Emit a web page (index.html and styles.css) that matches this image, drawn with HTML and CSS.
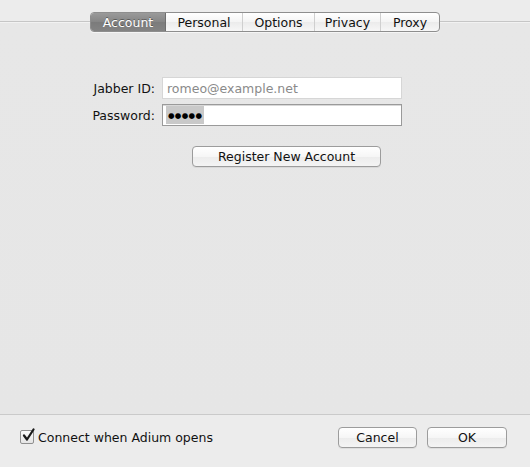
FILE: index.html
```html
<!DOCTYPE html>
<html>
<head>
<meta charset="utf-8">
<link rel="stylesheet" href="styles.css">
</head>
<body>
<div class="window">
  <div class="main">
    <div class="tabrow">
      <div class="rule"></div>
      <div class="tabs">
        <div class="tab sel t-account">Account</div>
        <div class="tab t-personal">Personal</div>
        <div class="tab t-options">Options</div>
        <div class="tab t-privacy">Privacy</div>
        <div class="tab t-proxy">Proxy</div>
      </div>
      <div class="rule"></div>
    </div>
    <div class="form">
      <div class="row">
        <label class="lbl">Jabber ID:</label>
        <div class="field idfield"><span class="ph">romeo@example.net</span></div>
      </div>
      <div class="row">
        <label class="lbl">Password:</label>
        <div class="field pwfield"><span class="dots">●●●●●</span></div>
      </div>
      <div class="regrow">
        <button class="btn regbtn">Register New Account</button>
      </div>
    </div>
  </div>
  <div class="bottom">
    <div class="check">
      <span class="box"><svg width="14" height="15" viewBox="0 0 14 15"><path d="M3 7.5 L6 11.5 L12.5 1.5" fill="none" stroke="#1a1a1a" stroke-width="2.2" stroke-linecap="round" stroke-linejoin="round"/></svg></span>
      <span class="ctext">Connect when Adium opens</span>
    </div>
    <div class="actions">
      <button class="btn cancel">Cancel</button>
      <button class="btn ok">OK</button>
    </div>
  </div>
</div>
</body>
</html>
```

FILE: styles.css
```css
* { box-sizing: border-box; }
html, body { margin: 0; padding: 0; }
body {
  width: 530px;
  height: 467px;
  overflow: hidden;
  font-family: "DejaVu Sans", "Liberation Sans", sans-serif;
  font-size: 12.5px;
  color: #111;
  background: #e8e8e8;
}
.window { display: flex; flex-direction: column; height: 467px; }
.main {
  height: 414px;
  background: linear-gradient(#ececec 0, #ececec 21px, #e7e7e7 22px, #e6e6e6 100%);
}
.tabrow {
  display: flex;
  align-items: center;
  padding-top: 12px;
  height: 32px;
}
.rule {
  flex: 1;
  height: 2px;
  border-top: 1px solid #c6c6c6;
  border-bottom: 1px solid #f2f2f2;
}
.tabs {
  display: flex;
  height: 20px;
  border: 1px solid #8e8e8e;
  border-radius: 4px;
  overflow: hidden;
  background: linear-gradient(#ffffff, #f4f4f4 50%, #ebebeb 51%, #f7f7f7);
  box-shadow: 0 1px 0 rgba(255,255,255,0.6);
}
.tab {
  display: flex;
  align-items: center;
  justify-content: center;
  border-left: 1px solid #cfcfcf;
  color: #111;
  line-height: 1;
  padding-top: 2px;
}
.tab:first-child { border-left: none; }
.tab.sel {
  background: linear-gradient(#9a9a9a, #858585 50%, #7b7b7b 51%, #838383);
  color: #fff;
  text-shadow: 0 -1px 0 rgba(0,0,0,0.35);
  border-right: 1px solid #6e6e6e;
}
.tab.sel + .tab { border-left: none; }
.t-account { width: 75px; }
.t-personal { width: 76px; }
.t-options { width: 72px; }
.t-privacy { width: 66px; }
.t-proxy { width: 59px; }

.form { padding-top: 45px; }
.row {
  display: flex;
  align-items: center;
  height: 22px;
  margin-bottom: 5px;
}
.lbl {
  width: 156px;
  text-align: right;
  padding-right: 1px;
  padding-top: 1px;
  color: #111;
}
.field {
  margin-left: 6px;
  width: 240px;
  height: 22px;
  background: #fff;
  display: flex;
  align-items: center;
  padding-left: 4px;
  padding-top: 1px;
}
.idfield { border: 1px solid #d6d6d6; }
.ph { color: #8a8a8a; }
.pwfield {
  border: 1px solid #9a9a9a;
  box-shadow: inset 0 1px 0 #d8d8d8;
  padding-left: 3px;
  padding-top: 0;
}
.dots {
  background: #c9c9c9;
  color: #000;
  font-family: "DejaVu Sans", sans-serif;
  font-size: 7.5px;
  letter-spacing: 0.3px;
  height: 18px;
  line-height: 20px;
  padding: 0 1px 0 2px;
  width: 38px;
  display: inline-block;
}
.regrow { padding-left: 192px; padding-top: 15px; }
.btn {
  font-family: "DejaVu Sans", "Liberation Sans", sans-serif;
  font-size: 12.5px;
  color: #111;
  height: 21px;
  border: 1px solid #9c9c9c;
  border-radius: 4px;
  background: linear-gradient(#ffffff, #f6f6f6 50%, #ececec 51%, #f4f4f4);
  box-shadow: 0 1px 0 rgba(0,0,0,0.06);
  padding: 1px 0 0 0;
  line-height: 18px;
  text-align: center;
}
.regbtn { width: 189px; }

.bottom {
  flex: 1;
  border-top: 1px solid #cacaca;
  background: #ececec;
  display: flex;
  align-items: flex-start;
  justify-content: space-between;
  padding: 12px 23px 0 20px;
}
.check {
  display: flex;
  align-items: center;
  padding-top: 2px;
}
.box {
  width: 14px;
  height: 14px;
  border: 1px solid #8f8f8f;
  border-radius: 2px;
  background: linear-gradient(#fafafa, #e4e4e4);
  position: relative;
  margin-right: 4px;
}
.box svg { position: absolute; left: 0; top: -3px; }
.ctext { color: #111; padding-top: 1px; }
.actions { display: flex; gap: 10px; }
.cancel { width: 79px; }
.ok { width: 80px; }
```
